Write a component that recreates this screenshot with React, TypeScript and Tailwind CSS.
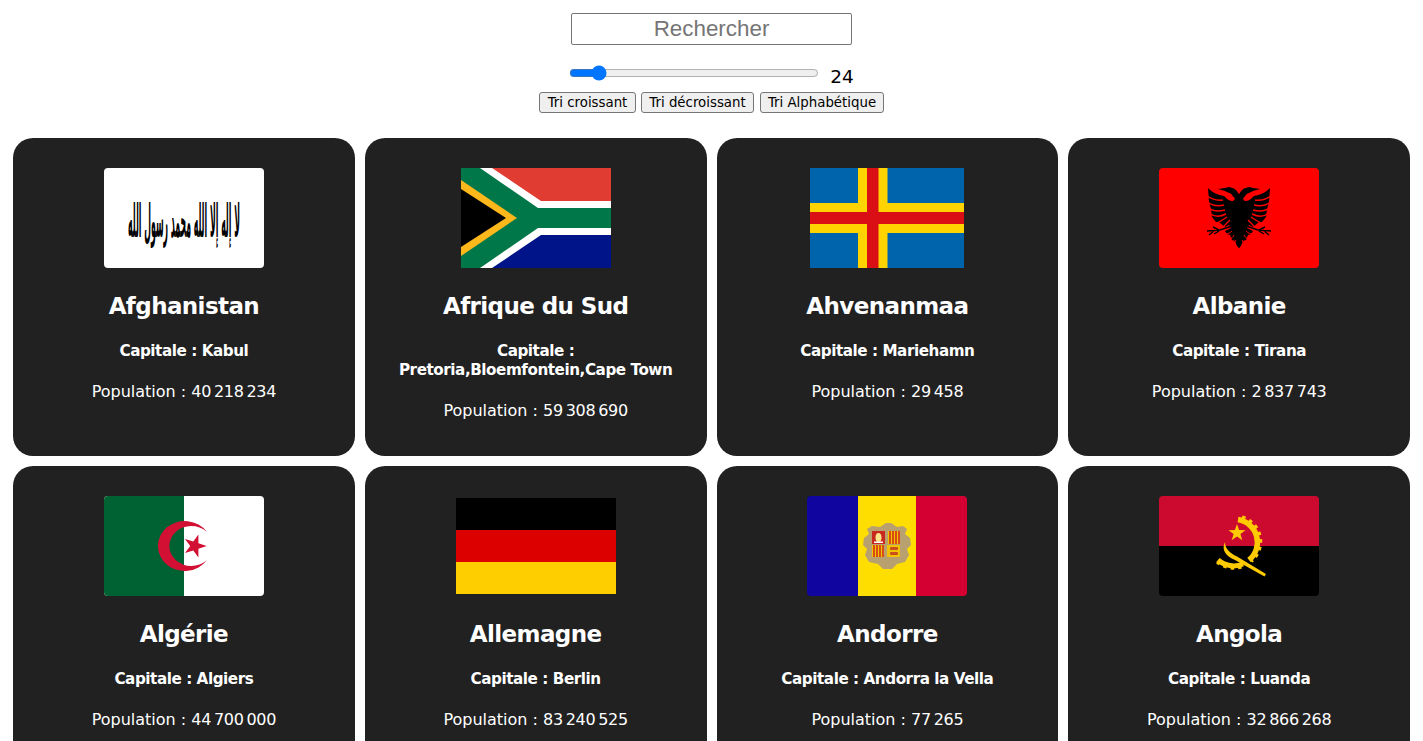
import React from 'react';

const nn = '\u202f';

function Afghanistan() {
	return (
		<svg width="160" height="100" viewBox="0 0 160 100" className="rounded-[4px]">
			<rect width="160" height="100" fill="#fff" />
			<g transform="translate(80 69) scale(1 2.7)">
				<text
					x="0"
					y="0"
					textAnchor="middle"
					fontFamily="'DejaVu Sans', sans-serif"
					fontWeight="bold"
					fontSize="17"
					textLength="112"
					lengthAdjust="spacingAndGlyphs"
					fill="#000"
				>
					لا إله إلا الله محمد رسول الله
				</text>
			</g>
		</svg>
	);
}

function SouthAfrica() {
	return (
		<svg width="150" height="100" viewBox="0 0 150 100">
			<rect width="150" height="50" fill="#e03c31" />
			<rect y="50" width="150" height="50" fill="#001489" />
			<polygon points="31,0 80,33 150,33 150,67 80,67 31,100 0,100 0,0" fill="#fff" />
			<polygon points="0,0 19,0 77,40 150,40 150,60 77,60 19,100 0,100" fill="#007749" />
			<polygon points="0,12 56,50 0,88" fill="#ffb81c" />
			<polygon points="0,21 45,50 0,79" fill="#000" />
		</svg>
	);
}

function Aland() {
	return (
		<svg width="154" height="100" viewBox="0 0 154 100">
			<rect width="154" height="100" fill="#0064ad" />
			<rect x="48" width="29.5" height="100" fill="#ffd300" />
			<rect y="35" width="154" height="30" fill="#ffd300" />
			<rect x="57" width="11.5" height="100" fill="#da0e15" />
			<rect y="44" width="154" height="12" fill="#da0e15" />
		</svg>
	);
}

function EagleHalf() {
	return (
		<g>
			{/* head and neck */}
			<path d="M81 44 L81 28 C79 25 78 22 75 20.5 L70 19 L66 20 L59 21 L66 23 L70 25 C74 26 75 30 74 34 Z" fill="#000" />
			{/* wing */}
			<path d="M49 20 C54 25 59 27 65 28 C68 31 70 33 74 33 L81 40 L81 62 L72 60 L70 57 L66 59 L60 54 L57 54 L53 49 L52 41 L50 34 Z" fill="#000" />
			<path d="M47 27 C52 31 58 33 64 32" stroke="#f00" strokeWidth="1.5" fill="none" />
			<path d="M47 33 C52 37 58 39 65 37" stroke="#f00" strokeWidth="1.5" fill="none" />
			<path d="M48 39 C53 43 59 44 66 42" stroke="#f00" strokeWidth="1.5" fill="none" />
			<path d="M50 45 C55 49 61 49 67 46" stroke="#f00" strokeWidth="1.5" fill="none" />
			<path d="M56 56 C60 54 64 52 68 49" stroke="#f00" strokeWidth="1.4" fill="none" />
			<path d="M63 61 C65 57 68 55 71 52" stroke="#f00" strokeWidth="1.4" fill="none" />
			{/* neck highlight */}
			<path d="M69 29 C71 33 74 34 76 31 C75 28 72 27 69 29 Z" fill="#f00" />
			{/* leg and talons */}
			<path d="M73 58 L61 62 L48 63 M56 62 L50 67 M60 63 L55 66 M60 62 L54 59" stroke="#000" strokeWidth="1.4" fill="none" />
			{/* tail */}
			<path d="M72 60 L81 60 L81 80 L78 78 L76 73 L73 72 L71 67 L68 66 L66 63 Z" fill="#000" />
			<path d="M66 66 C69 66 71 65 73 63" stroke="#f00" strokeWidth="1" fill="none" />
			<path d="M70 71 C72 71 74 69 75 67" stroke="#f00" strokeWidth="1" fill="none" />
			<path d="M74 76 C75 75 76 74 77 72" stroke="#f00" strokeWidth="1" fill="none" />
		</g>
	);
}

function Albania() {
	return (
		<svg width="160" height="100" viewBox="0 0 160 100" className="rounded-[4px]">
			<rect width="160" height="100" fill="#f00" />
			<EagleHalf />
			<g transform="translate(160 0) scale(-1 1)">
				<EagleHalf />
			</g>
		</svg>
	);
}

function Algeria() {
	return (
		<svg width="160" height="100" viewBox="0 0 160 100" className="rounded-[4px]">
			<rect width="160" height="100" fill="#fff" />
			<rect width="80" height="100" fill="#006233" />
			<path d="M102.7 35.7 A26.8 25 0 1 0 102.7 64.3 A22 20 0 1 1 102.7 35.7 Z" fill="#d21034" />
			<polygon
				transform="translate(-0.8 0)"
				points="103.5,50 95.2,52.7 95.2,61.4 90.1,54.4 81.8,57.1 87,50 81.8,42.9 90.1,45.6 95.2,38.6 95.2,47.3"
				fill="#d21034"
			/>
		</svg>
	);
}

function Germany() {
	return (
		<svg width="160" height="96" viewBox="0 0 160 96">
			<rect width="160" height="32" fill="#000" />
			<rect y="32" width="160" height="32" fill="#dd0000" />
			<rect y="64" width="160" height="32" fill="#ffce00" />
		</svg>
	);
}

function Andorra() {
	return (
		<svg width="160" height="100" viewBox="0 0 160 100" className="rounded-[4px]">
			<rect width="51" height="100" fill="#10069f" />
			<rect x="51" width="58" height="100" fill="#fedd00" />
			<rect x="109" width="51" height="100" fill="#d50032" />
			{/* coat of arms */}
			<path
				d="M73 31 L76 29 L79 27 L84 27 L87 29 L90 31 L96 30 L100 33 L98 38 L103 42 L104 49 L100 53 L102 59 L98 66 L90 68 L85 73 L76 73 L71 68 L62 66 L58 59 L60 53 L56 49 L57 42 L62 38 L60 33 L65 30 Z"
				fill="#b8a16f"
			/>
			<rect x="65" y="35" width="13" height="13" fill="#c8281e" />
			<ellipse cx="71.5" cy="41.5" rx="3" ry="4.5" fill="#fde58a" />
			<rect x="67" y="45.5" width="9" height="1.5" fill="#fff" />
			<rect x="81" y="35" width="12" height="13" fill="#f2c300" />
			<path d="M83 35v13M86 35v13M89 35v13M92 35v13" stroke="#d0261c" strokeWidth="1.5" />
			<rect x="65" y="49" width="12" height="12" fill="#f2c300" />
			<path d="M67 49v12M70 49v12M73 49v12M76 49v12" stroke="#d0261c" strokeWidth="1.5" />
			<rect x="80" y="49" width="13" height="12" fill="#f2c300" />
			<rect x="83" y="51" width="8" height="3" rx="1" fill="#c8501e" />
			<rect x="83" y="56" width="8" height="3" rx="1" fill="#c8501e" />
		</svg>
	);
}

function Angola() {
	return (
		<svg width="160" height="100" viewBox="0 0 160 100" className="rounded-[4px]">
			<rect width="160" height="50" fill="#cc092f" />
			<rect y="50" width="160" height="50" fill="#000" />
			<polygon
				points="78,28 80.1,34.1 86.6,34.2 81.4,38.1 83.3,44.3 78,40.6 72.7,44.3 74.6,38.1 69.4,34.2 75.9,34.1"
				fill="#ffcb00"
			/>
			{/* gear */}
			<path d="M79 23.5 A23 23 0 0 1 90 64" stroke="#ffcb00" strokeWidth="5.5" fill="none" />
			<path d="M83 21.5 A25 25 0 0 1 92 65" stroke="#ffcb00" strokeWidth="4" strokeDasharray="3.5 4" fill="none" />
			<path d="M59 64 A24 24 0 0 0 84 68" stroke="#ffcb00" strokeWidth="5" fill="none" />
			<path d="M58 66 A26 26 0 0 0 84 70.5" stroke="#ffcb00" strokeWidth="3" strokeDasharray="3.5 4" fill="none" />
			{/* machete */}
			<path d="M66 46 C66 53 71 57 78 60.5 L107 78 L105.5 80.5 L76 64 C67 60 62 54 66 46 Z" fill="#ffcb00" />
		</svg>
	);
}

const countries = [
	{ name: 'Afghanistan', capital: 'Kabul', population: `40${nn}218${nn}234`, flag: <Afghanistan /> },
	{ name: 'Afrique du Sud', capital: 'Pretoria,Bloemfontein,Cape Town', population: `59${nn}308${nn}690`, flag: <SouthAfrica /> },
	{ name: 'Ahvenanmaa', capital: 'Mariehamn', population: `29${nn}458`, flag: <Aland /> },
	{ name: 'Albanie', capital: 'Tirana', population: `2${nn}837${nn}743`, flag: <Albania /> },
	{ name: 'Algérie', capital: 'Algiers', population: `44${nn}700${nn}000`, flag: <Algeria /> },
	{ name: 'Allemagne', capital: 'Berlin', population: `83${nn}240${nn}525`, flag: <Germany /> },
	{ name: 'Andorre', capital: 'Andorra la Vella', population: `77${nn}265`, flag: <Andorra /> },
	{ name: 'Angola', capital: 'Luanda', population: `32${nn}866${nn}268`, flag: <Angola /> },
];

export default function App() {
	return (
		<div className="min-h-screen bg-white font-['DejaVu_Sans',sans-serif] text-black">
			{/* Search and controls */}
			<div className="flex flex-col items-center pt-[13px]">
				<input
					type="text"
					placeholder="Rechercher"
					className="h-[32px] w-[281px] rounded-[2px] border border-[#767676] pb-[1px] text-center font-['Liberation_Sans',sans-serif] text-[22.4px] placeholder:text-[#757575]"
				/>
				<div className="mt-[20px] flex h-[27px] items-start gap-[11px]">
					<input type="range" min={1} max={250} defaultValue={24} className="w-[250px]" />
					<span className="mt-[1px] text-[18.5px] leading-[21px]">24</span>
				</div>
				<div className="flex">
					<button className="h-[21px] w-[97px] rounded-[3px] border border-[#767676] bg-[#efefef] text-[13.33px]">Tri croissant</button>
					<button className="ml-[5px] h-[21px] w-[113px] rounded-[3px] border border-[#767676] bg-[#efefef] text-[13.33px]">Tri décroissant</button>
					<button className="ml-[6px] h-[21px] w-[124px] rounded-[3px] border border-[#767676] bg-[#efefef] text-[13.33px]">Tri Alphabétique</button>
				</div>
			</div>

			{/* Countries */}
			<div className="mt-[25px] grid grid-cols-4 gap-[10px] px-[13px]">
				{countries.map((country) => (
					<div key={country.name} className="rounded-[20px] bg-[#212121] px-[20px] pb-[36px] pt-[30px] text-center text-white">
						<div className="flex h-[100px] items-center justify-center">{country.flag}</div>
						<h2 className="mt-[24px] text-[23px] font-bold leading-[28px] tracking-[-0.6px]">{country.name}</h2>
						<p className="mt-[22px] text-[15.2px] font-bold leading-[19px] tracking-[-0.45px]">Capitale : {country.capital}</p>
						<p className="mt-[21px] text-[16px] leading-[19px]">
							Population : <span className="tracking-[-0.3px]">{country.population}</span>
						</p>
					</div>
				))}
			</div>
		</div>
	);
}
